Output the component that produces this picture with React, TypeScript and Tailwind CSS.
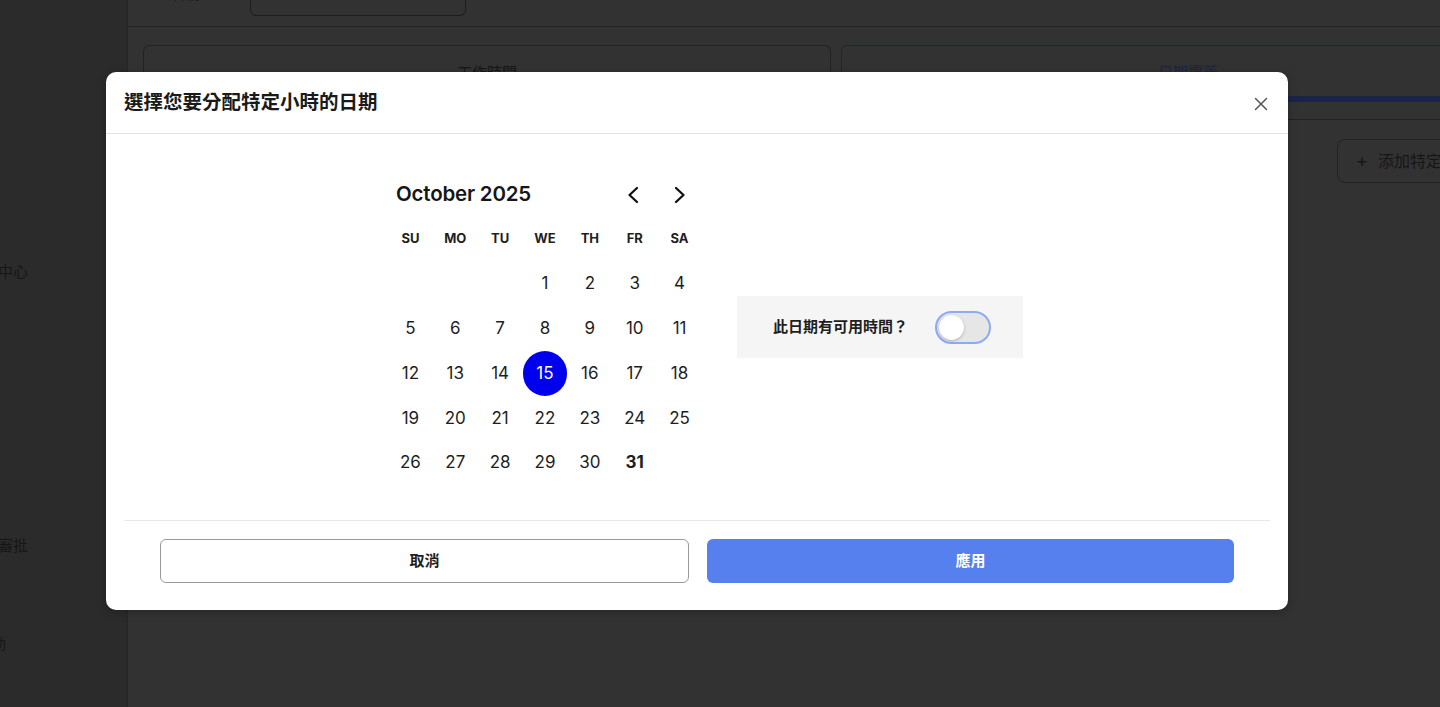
import React from "react";

const FONT = "font-['Inter','Noto_Sans_CJK_TC',sans-serif]";

function ChevronLeft() {
  return (
    <svg width="16" height="18" viewBox="0 0 16 18" fill="none">
      <path d="M12 2 L4.5 9 L12 16" stroke="#111" strokeWidth="2.3" strokeLinecap="round" strokeLinejoin="round" />
    </svg>
  );
}
function ChevronRight() {
  return (
    <svg width="16" height="18" viewBox="0 0 16 18" fill="none">
      <path d="M4 2 L11.5 9 L4 16" stroke="#111" strokeWidth="2.3" strokeLinecap="round" strokeLinejoin="round" />
    </svg>
  );
}

export default function App() {
  const weekdays = ["SU", "MO", "TU", "WE", "TH", "FR", "SA"];
  const cells: (number | null)[] = [null, null, null];
  for (let d = 1; d <= 31; d++) cells.push(d);
  while (cells.length < 35) cells.push(null);

  return (
    <div className={`relative w-[1440px] h-[707px] overflow-hidden flex ${FONT}`}>
      {/* Background sidebar */}
      <div className="w-[128px] shrink-0 h-full bg-[#2b2b2b] border-r border-[#262626] flex flex-col text-[15px] text-[#161616]">
        <div className="h-[262px]" />
        <div className="-ml-[2px] leading-[20px]">中心</div>
        <div className="h-[254px]" />
        <div className="-ml-[2px] leading-[20px]">審批</div>
        <div className="h-[78px]" />
        <div className="-ml-[9px] leading-[20px]">動</div>
      </div>

      {/* Background main */}
      <div className="flex-1 h-full bg-[#323232] flex flex-col overflow-hidden">
        <div className="h-[27px] border-b border-[#222] shrink-0 overflow-hidden">
          <div className="flex items-end -mt-[24px] h-[40px]">
            <div className="w-[42px]" />
            <div className="text-[15px] text-[#161616] w-[80px] leading-[20px] mb-[12px]">名稱</div>
            <div className="w-[216px] h-[40px] rounded-b-[6px] border border-[#1d1d1d] border-t-0 text-[15px] text-[#161616] pl-[14px] flex items-start overflow-hidden">
              <span className="mt-[6px] leading-[20px]">Demo</span>
            </div>
          </div>
        </div>
        <div className="flex gap-[10px] pl-[15px] pt-[18px] shrink-0">
          <div className="w-[688px] shrink-0 h-[74px] rounded-t-[6px] border border-[#222] border-b-0 flex justify-center pt-[16px] text-[15px] text-[#161616]">
            工作時間
          </div>
          <div className="w-[694px] shrink-0 h-[74px] rounded-t-[6px] border border-[#1c2540] border-b-0 flex flex-col">
            <div className="flex-1 flex justify-center pt-[16px] text-[15px] text-[#1b2542]">日期覆蓋</div>
            <div className="h-[6px] bg-[#1a2447] mb-[17px]" />
          </div>
        </div>
        <div className="border-t border-[#222] shrink-0" />
        <div className="flex pt-[19px] pl-[1209px] shrink-0">
          <div className="w-[140px] h-[44px] shrink-0 rounded-[8px] border border-[#222] flex items-center pl-[18px] gap-[10px] text-[16px] text-[#161616]">
            <span className="text-[18px] leading-none">+</span>
            <span>添加特定日期</span>
          </div>
        </div>
      </div>

      {/* Modal */}
      <div className="absolute left-[106px] top-[72px] w-[1182px] h-[538px] bg-white rounded-[10px] shadow-[0_2px_10px_rgba(0,0,0,0.25)] flex flex-col">
        <div className="h-[62px] border-b border-[#e3e3ea] flex items-center justify-between pl-[18px] pr-[20px] shrink-0">
          <div className="text-[19.5px] font-bold text-[#1a1a1a] tracking-[0px]">選擇您要分配特定小時的日期</div>
          <svg width="14" height="14" viewBox="0 0 14 14" className="mt-[2px]">
            <path d="M1.5 1.5 L12.5 12.5 M12.5 1.5 L1.5 12.5" stroke="#555" strokeWidth="1.5" strokeLinecap="round" />
          </svg>
        </div>

        <div className="h-[386px] flex items-center pl-[282px] gap-[35px] shrink-0">
          <div className="w-[314px] flex flex-col mt-[4px]">
            <div className="h-[44px] flex items-center justify-between pl-[8px] pr-[14px]">
              <div className="text-[20.5px] font-semibold text-[#161616] tracking-[-0.2px]">October 2025</div>
              <div className="flex items-center gap-[31px]">
                <ChevronLeft />
                <ChevronRight />
              </div>
            </div>
            <div className="grid grid-cols-7 h-[45px] items-center">
              {weekdays.map((w) => (
                <div key={w} className="text-center text-[13px] font-bold text-[#1e1e1e]">{w}</div>
              ))}
            </div>
            <div className="grid grid-cols-7">
              {cells.map((d, i) => (
                <div key={i} className="h-[44.8px] flex items-center justify-center">
                  {d === 15 ? (
                    <div className="w-[45px] h-[45px] rounded-full bg-[#0000ee] text-white flex items-center justify-center text-[17px]">15</div>
                  ) : d ? (
                    <span className={`text-[17px] text-[#1e1e1e] ${d === 31 ? "font-bold" : ""}`}>{d}</span>
                  ) : null}
                </div>
              ))}
            </div>
          </div>

          <div className="w-[286px] h-[62px] bg-[#f5f5f5] flex items-center pl-[36px] gap-[27px]">
            <span className="text-[15px] font-bold text-[#1e1e1e]">此日期有可用時間？</span>
            <div className="w-[56px] h-[33px] rounded-full border-2 border-[#8eaaf4] bg-[#e6e6e6] flex items-center pl-[2px]">
              <div className="w-[25px] h-[25px] rounded-full bg-white shadow-[0_1px_3px_rgba(0,0,0,0.25)]" />
            </div>
          </div>
        </div>

        <div className="mx-[18px] border-t border-[#e6e6ee] shrink-0" />
        <div className="flex gap-[18px] px-[54px] pt-[18px]">
          <button className="flex-1 h-[44px] rounded-[6px] border border-[#9a9a9a] bg-white text-[15px] font-semibold text-[#1e1e1e]">取消</button>
          <button className="flex-1 h-[44px] rounded-[6px] bg-[#5580ee] text-[15px] font-semibold text-white">應用</button>
        </div>
      </div>
    </div>
  );
}
